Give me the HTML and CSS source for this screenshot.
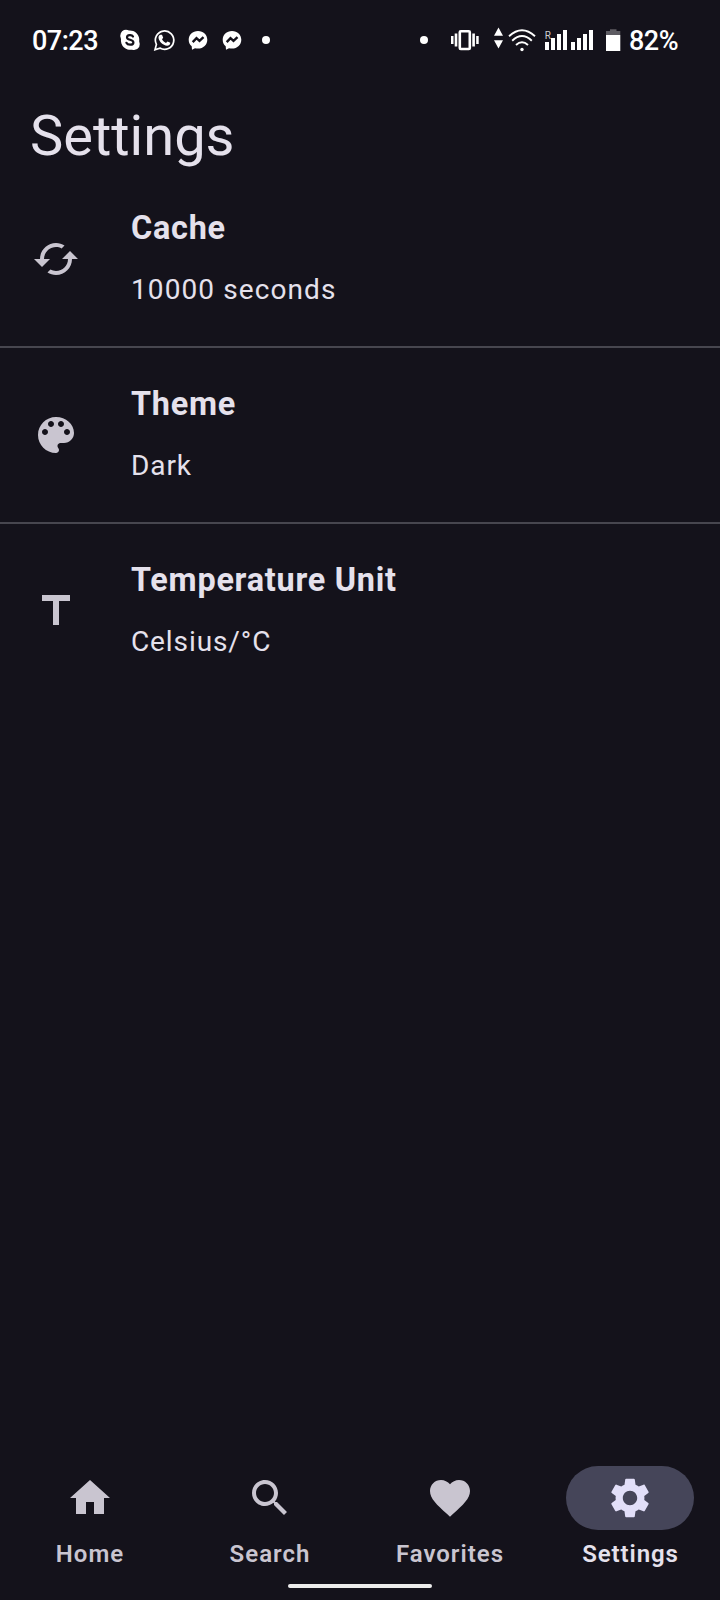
FILE: index.html
```html
<!DOCTYPE html>
<html lang="en">
<head>
<meta charset="utf-8">
<title>Settings</title>
<link rel="stylesheet" href="styles.css">
</head>
<body>
<div class="screen">
  <header class="status">
    <span class="clock">07:23</span>
    <svg class="status-left" width="160" height="40" viewBox="110 20 160 40">
      <path fill="#fff" d="M124 30q3-.6 5 .5a9.500 9.500 0 0 1 10.200 11q1.300 3 0 5.500-2.500 4-7.200 2.700a9.500 9.500 0 0 1-11-10.700q-1.500-3-.2-5.800 1-2.400 3.200-3.200z"/>
      <path fill="none" stroke="#14121b" stroke-width="2.200" stroke-linecap="round" d="M133 36.600c-1-2-6-2-6 .8 0 3 6.400 1.800 6.400 5 0 3-5.800 3-7 .4"/>
      <path fill="none" stroke="#fff" stroke-width="1.700" d="M155 49.700l1.400-5.300a9.200 9.200 0 1 1 3.500 3.700z"/>
      <path fill="#fff" d="M160.500 34.800h1.500l1.200 3-1.200 1.500c1 1.800 2.300 2.900 4 3.700l1.500-1.600 2.800 1.400c0 2-1.500 3-3.200 3-4.200-.5-8.400-4.500-8.600-8.300 0-1.200.8-2.500 2-2.700z"/>
      <g id="messenger">
        <path fill="#fff" d="M198 31c-5.400 0-9.300 3.800-9.300 8.800 0 2.700 1.100 4.900 3 6.500l.3 3.400 3-1.500c1 .3 2 .4 3 .4 5.400 0 9.300-3.800 9.300-8.800S203.400 31 198 31z"/>
        <path fill="none" stroke="#14121b" stroke-width="2.400" d="M192.700 42.200l3.800-4 3 2.700 4-3.700"/>
      </g>
      <use href="#messenger" x="34"/>
      <circle cx="266" cy="40" r="4" fill="#fff"/>
    </svg>
    <svg class="status-right" width="204" height="40" viewBox="418 20 204 40">
      <g fill="#fff">
        <circle cx="424" cy="40" r="4"/>
        <path d="M451 36h2.500v8H451zM454.700 33.500h2.600v13h-2.600zM472.300 33.500h2.600v13h-2.600zM476.200 36h2.500v8h-2.500z"/>
        <path d="M498.500 27.500l4.500 8.300h-9zM498.500 48.500l4.500-8.300h-9z"/>
        <circle cx="522" cy="49.500" r="1.700"/>
        <path d="M545 42h4v8h-4zM551 38h4v12h-4zM557 34h4v16h-4zM563 30h4v20h-4zM571 42h4v8h-4zM577 38h4v12h-4zM583 34h4v16h-4zM589 30h4v20h-4zM606 35h14.300v16H606z"/>
      </g>
      <path fill="#5d5b62" d="M610 29.300h6.500V31h3.800v4H606v-4h4z"/>
      <rect x="459.800" y="31.200" width="10" height="17.800" rx="1" fill="none" stroke="#fff" stroke-width="2.600"/>
      <path fill="none" stroke="#fff" stroke-width="1.900" d="M509 36.300q13-12 26 0M512.200 40.700q9.800-9.500 19.600 0M516 45q6-5.500 12 0"/>
      <text class="roaming" x="544.800" y="38.500">R</text>
    </svg>
    <span class="battery">82%</span>
  </header>

  <h1 class="title">Settings</h1>

  <main class="list">
    <section class="row">
      <svg class="icon" viewBox="0 0 24 24"><path d="M19 8l-4 4h3c0 3.310-2.690 6-6 6-1.010 0-1.970-.25-2.800-.7l-1.460 1.460C8.970 19.540 10.430 20 12 20c4.420 0 8-3.580 8-8h3l-4-4zM6 12c0-3.310 2.690-6 6-6 1.010 0 1.970.25 2.800.7l1.460-1.460C15.030 4.460 13.570 4 12 4c-4.420 0-8 3.580-8 8H1l4 4 4-4H6z"/></svg>
      <div class="text"><h2 class="name">Cache</h2><p class="value wide">10000 seconds</p></div>
    </section>
    <section class="row">
      <svg class="icon" viewBox="0 0 24 24"><path d="M12 3c-4.970 0-9 4.030-9 9s4.030 9 9 9c.83 0 1.500-.67 1.500-1.500 0-.39-.15-.74-.39-1.010-.23-.26-.38-.61-.38-.99 0-.83.67-1.500 1.500-1.500H16c2.760 0 5-2.240 5-5 0-4.420-4.030-8-9-8zm-5.500 9c-.83 0-1.500-.67-1.500-1.500S5.670 9 6.500 9 8 9.670 8 10.500 7.330 12 6.500 12zm3-4C8.670 8 8 7.330 8 6.500S8.670 5 9.500 5s1.500.67 1.500 1.500S10.330 8 9.500 8zm5 0c-.83 0-1.500-.67-1.500-1.500S13.670 5 14.500 5s1.500.67 1.500 1.500S15.330 8 14.500 8zm3 4c-.83 0-1.500-.67-1.500-1.500S16.670 9 17.500 9s1.500.67 1.500 1.500-.67 1.500-1.500 1.500z"/></svg>
      <div class="text"><h2 class="name">Theme</h2><p class="value">Dark</p></div>
    </section>
    <section class="row">
      <svg class="icon" viewBox="0 0 24 24"><path d="M5 4v3h5.500v12h3V7H19V4z"/></svg>
      <div class="text"><h2 class="name">Temperature Unit</h2><p class="value">Celsius/°C</p></div>
    </section>
  </main>

  <nav class="nav">
    <div class="tab">
      <span class="pill"><svg class="icon" viewBox="0 0 24 24"><path d="M10 20v-6h4v6h5v-8h3L12 3 2 12h3v8z"/></svg></span>
      <span class="label">Home</span>
    </div>
    <div class="tab">
      <span class="pill"><svg class="icon" viewBox="0 0 24 24"><path d="M15.500 14h-.79l-.28-.27C15.410 12.590 16 11.110 16 9.500 16 5.910 13.090 3 9.500 3S3 5.910 3 9.500 5.910 16 9.500 16c1.610 0 3.090-.59 4.230-1.570l.27.28v.79l5 4.990L20.490 19l-4.990-5zm-6 0C7.010 14 5 11.990 5 9.500S7.010 5 9.500 5 14 7.010 14 9.500 11.990 14 9.500 14z"/></svg></span>
      <span class="label">Search</span>
    </div>
    <div class="tab">
      <span class="pill"><svg class="icon" viewBox="0 0 24 24"><path d="M12 21.350l-1.450-1.320C5.400 15.360 2 12.280 2 8.500 2 5.420 4.420 3 7.500 3c1.740 0 3.410.81 4.500 2.090C13.090 3.810 14.760 3 16.500 3 19.580 3 22 5.420 22 8.500c0 3.780-3.400 6.860-8.550 11.540L12 21.350z"/></svg></span>
      <span class="label">Favorites</span>
    </div>
    <div class="tab active">
      <span class="pill"><svg class="icon" viewBox="0 0 24 24"><path d="M19.140 12.940c.04-.3.060-.61.060-.94 0-.32-.02-.64-.07-.94l2.030-1.580c.18-.14.230-.41.120-.61l-1.920-3.320c-.12-.22-.37-.29-.59-.22l-2.390.96c-.5-.38-1.030-.7-1.620-.94l-.36-2.540c-.04-.24-.24-.41-.48-.41h-3.840c-.24 0-.43.170-.47.410l-.36 2.540c-.59.240-1.130.570-1.620.940l-2.390-.96c-.22-.08-.47 0-.59.220L2.740 8.870c-.12.210-.08.470.120.610l2.030 1.580c-.05.300-.09.630-.09.940s.02.640.070.940l-2.030 1.580c-.18.140-.23.410-.12.610l1.920 3.320c.12.220.370.290.590.220l2.390-.96c.5.380 1.030.7 1.620.940l.36 2.540c.05.240.240.410.480.410h3.840c.24 0 .44-.17.470-.41l.36-2.540c.59-.24 1.130-.56 1.620-.94l2.390.96c.22.080.470 0 .59-.22l1.920-3.320c.12-.22.070-.47-.12-.61l-2.010-1.580zM12 15.600c-1.980 0-3.600-1.620-3.600-3.600s1.620-3.600 3.600-3.600 3.600 1.620 3.600 3.600-1.620 3.600-3.600 3.600z"/></svg></span>
      <span class="label">Settings</span>
    </div>
  </nav>
  <div class="handle"></div>
</div>
</body>
</html>
```
FILE: styles.css
```css
* { box-sizing: border-box; margin: 0; padding: 0; }
body { background: #14121b; color: #e5e1ec; font-family: Roboto, "Noto Sans", sans-serif; }
.screen { display: flex; flex-direction: column; height: 1600px; width: 720px; overflow: hidden; }
.status { display: flex; align-items: center; height: 80px; padding: 0 0 0 32px; color: #fff; font-size: 27px; font-weight: 500; line-height: 40px; letter-spacing: -0.5px; }
.clock { width: 78px; padding-top: 2px; white-space: nowrap; }
.status-left { flex: none; }
.status-right { flex: none; margin-left: 148px; }
.battery { margin-left: 7px; padding-top: 2px; }
.roaming { fill: #cfced1; font-size: 10px; font-weight: 400; }
.title { height: 106px; padding: 23px 0 0 30px; font-size: 56px; font-weight: 400; line-height: 66px; }
.row { display: flex; height: 176px; padding: 22px 0 0 32px; border-bottom: 2px solid #47464f; }
.list { margin-top: -14px; }
.row:last-child { border-bottom-color: transparent; }
.icon { display: block; flex: none; width: 48px; height: 48px; fill: #c9c5d0; }
.row .icon { margin-top: 41px; }
.text { margin-left: 51px; }
.name { margin-top: 14px; font-size: 32.4px; font-weight: 700; line-height: 40px; letter-spacing: 0.75px; }
.value { margin-top: 22px; font-size: 28px; line-height: 40px; letter-spacing: 0.9px; }
.wide { letter-spacing: 1.1px; }
.nav { display: grid; grid-template-columns: repeat(4, 180px); margin-top: auto; }
.tab { display: flex; flex-direction: column; align-items: center; }
.pill { display: flex; align-items: center; justify-content: center; width: 128px; height: 64px; border-radius: 32px; }
.label { margin-top: 8px; font-size: 24px; font-weight: 600; line-height: 32px; letter-spacing: 1px; color: #c9c5d0; }
.active .pill { background: #454559; }
.active .icon { fill: #e2dff9; }
.active .label { padding-left: 1px; letter-spacing: 0.9px; color: #e5e1ec; }
.handle { width: 144px; height: 4px; margin: 14px auto 12px; border-radius: 2px; background: #ececec; }
```
